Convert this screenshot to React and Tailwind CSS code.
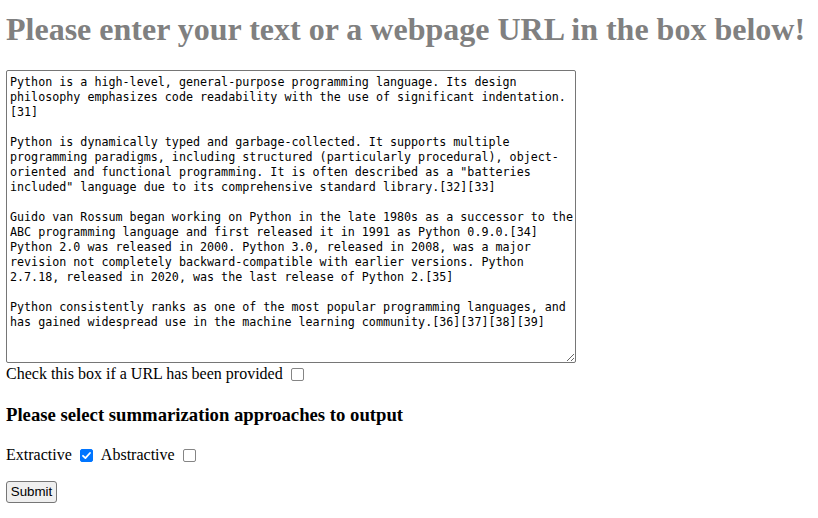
import React from "react";

const text = `Python is a high-level, general-purpose programming language. Its design
philosophy emphasizes code readability with the use of significant indentation.
[31]

Python is dynamically typed and garbage-collected. It supports multiple
programming paradigms, including structured (particularly procedural), object-
oriented and functional programming. It is often described as a "batteries
included" language due to its comprehensive standard library.[32][33]

Guido van Rossum began working on Python in the late 1980s as a successor to the
ABC programming language and first released it in 1991 as Python 0.9.0.[34]
Python 2.0 was released in 2000. Python 3.0, released in 2008, was a major
revision not completely backward-compatible with earlier versions. Python
2.7.18, released in 2020, was the last release of Python 2.[35]

Python consistently ranks as one of the most popular programming languages, and
has gained widespread use in the machine learning community.[36][37][38][39]`;

function Checkbox({ defaultChecked = false, wide = false }) {
  const [on, setOn] = React.useState(defaultChecked);
  return (
    <span
      className={
        wide
          ? "relative inline-block w-[13px] h-[13px] align-[-2px] ml-[4px] mr-[5px]"
          : "relative inline-block w-[13px] h-[13px] align-[-2px] ml-[4px] mr-[3px]"
      }
    >
      <input
        type="checkbox"
        checked={on}
        onChange={(e) => setOn(e.target.checked)}
        className="appearance-none block w-[13px] h-[13px] m-0 rounded-[2px] border-[1.5px] border-[#858585] bg-white checked:bg-[#0075ff] checked:border-[#0075ff]"
      />
      {on && (
        <svg
          viewBox="0 0 13 13"
          className="absolute left-0 top-0 w-[13px] h-[13px] pointer-events-none"
        >
          <path d="M3 6.8 L5.4 9.1 L10 4" fill="none" stroke="white" strokeWidth="1.8" strokeLinecap="round" strokeLinejoin="round" />
        </svg>
      )}
    </span>
  );
}

export default function App() {
  return (
    <div className="px-[6px] pt-[12px] font-['Liberation_Serif',serif] text-[16px] text-black bg-white min-h-[518px]">
      <h1 className="text-[32px] leading-[35px] font-bold text-[#808080] mb-[23px] whitespace-nowrap">
        Please enter your text or a webpage URL in the box below!
      </h1>
      <form onSubmit={(e) => e.preventDefault()}>
        <textarea
          defaultValue={text}
          wrap="off"
          spellCheck={false}
          className="block w-[570px] h-[293px] border border-[#767676] rounded-[2px] pl-[3px] pr-[2px] pt-[4px] pb-[2px] font-['DejaVu_Sans_Mono',monospace] text-[11.7px] leading-[15px] resize overflow-hidden"
        />
        <div className="mt-[2px] leading-[18px]">
          Check this box if a URL has been provided <Checkbox />
        </div>
        <h3 className="text-[18.72px] font-bold leading-[21px] mt-[21px]">
          Please select summarization approaches to output
        </h3>
        <div className="mt-[21px] leading-[18px]">
          Extractive <Checkbox defaultChecked wide /> Abstractive <Checkbox />
        </div>
        <div className="mt-[15px]">
          <button
            type="submit"
            className="w-[51px] h-[22px] border border-[#767676] bg-[#efefef] rounded-[3px] font-['Liberation_Sans',Arial,sans-serif] text-[13.33px] leading-[17px]"
          >
            Submit
          </button>
        </div>
      </form>
    </div>
  );
}
